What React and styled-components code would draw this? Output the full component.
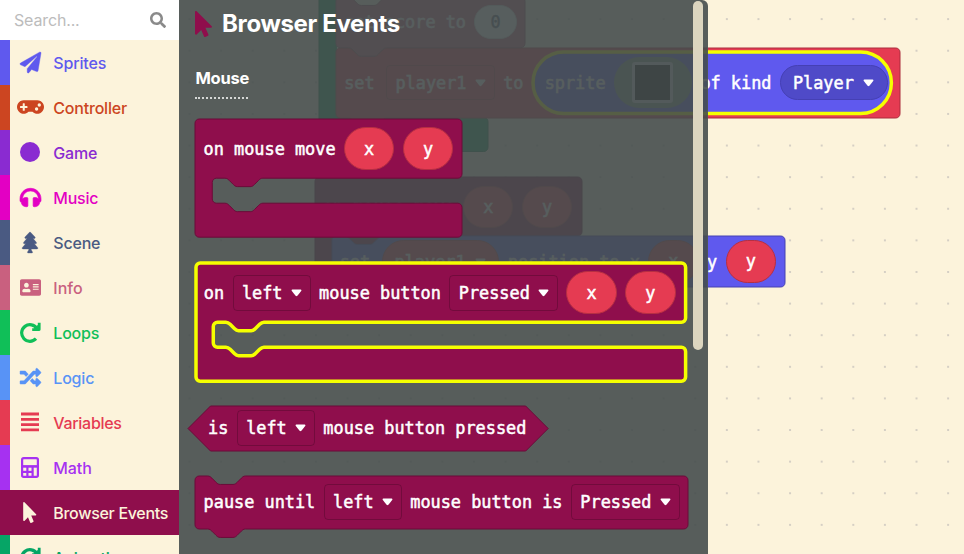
import React from "react";
import styled, { createGlobalStyle } from "styled-components";
import {
  FaSearch, FaPaperPlane, FaGamepad, FaHeadphones, FaTree,
  FaAddressCard, FaRandom, FaMousePointer,
} from "react-icons/fa";

const K = 1.054; // workspace zoom
const CREAM = "#fcf3db";
const MAROON = "#8f0e4c";
const RED = "#e53b52";
const BLUE = "#5f59ee";
const GREEN = "#11a15e";
const INFO = "#c9607f";
const YELLOW = "#f5ff00";

const GlobalStyle = createGlobalStyle`
  * { box-sizing: border-box; }
  body { margin: 0; overflow: hidden; }
`;

const Page = styled.div`
  position: relative;
  display: flex;
  width: 964px;
  height: 554px;
  overflow: hidden;
  font-family: Inter, "Liberation Sans", sans-serif;
  background: ${CREAM};
`;

/* ---------- toolbox ---------- */
const Toolbox = styled.nav`
  width: 179px;
  flex: none;
  background: ${CREAM};
`;
const SearchBar = styled.div`
  display: flex;
  align-items: center;
  justify-content: space-between;
  height: 40px;
  padding: 0 13.5px 0 14px;
  background: #fff;
  color: #bcbcbc;
  font-size: 16px;
  letter-spacing: -0.15px;
  svg { width: 16px; height: 16px; color: #8a8a8a; }
`;
const Category = styled.div`
  display: flex;
  align-items: center;
  height: 45px;
  border-left: 10px solid ${(p) => p.$color};
  background: ${(p) => (p.$active ? p.$color : "transparent")};
  color: ${(p) => (p.$active ? CREAM : p.$color)};
  font-size: 16px;
  font-weight: 500;
  letter-spacing: ${(p) => p.$track}px;
  white-space: nowrap;
`;
const CategoryIcon = styled.span`
  display: flex;
  justify-content: center;
  width: 40px;
  margin-right: 3.3px;
  flex: none;
  margin-top: -1px;
  svg { width: ${(p) => p.$w}px; height: ${(p) => p.$h}px; }
`;

function CalculatorIcon() {
  return (
    <svg viewBox="0 0 18 21" fill="none" stroke="currentColor">
      <rect x="1.1" y="1.1" width="15.8" height="18.8" rx="1.6" strokeWidth="2.2" />
      <path d="M1 9.4H17" strokeWidth="2.6" />
      <path d="M6.4 9.5V20M11.6 9.5V20" strokeWidth="2.2" />
      <path d="M1 14.9H12" strokeWidth="2.2" />
    </svg>
  );
}
function RedoIcon() {
  return (
    <svg viewBox="0 0 21 21" fill="none" stroke="currentColor">
      <path d="M17 6.6A8.3 8.3 0 1 0 16 16.7" strokeWidth="3.2" />
      <path d="M12.2 7.6H19.2V.8" strokeWidth="2.8" strokeLinejoin="round" />
      <path d="M14.4 6.8L18.6 2.8V7.6Z" fill="currentColor" />
    </svg>
  );
}
function CircleIcon() {
  return <svg viewBox="0 0 20 20"><circle cx="10" cy="10" r="10" fill="currentColor" /></svg>;
}
function LinesIcon() {
  return (
    <svg viewBox="0 0 18 20" stroke="currentColor" strokeWidth="2.8">
      <path d="M0 2H18M0 7.3H18M0 12.6H18M0 17.9H18" />
    </svg>
  );
}

/* name, colour, icon, icon width, icon height, icon stroke, letter spacing */
const categories = [
  ["Sprites", BLUE, FaPaperPlane, 21, 21, 10, -0.15],
  ["Controller", "#cc4521", FaGamepad, 27, 22, 0, -0.2],
  ["Game", "#8a2bd1", CircleIcon, 20, 20, 0, -0.2],
  ["Music", "#e300c3", FaHeadphones, 21, 21, 16, -0.2],
  ["Scene", "#4a5a82", FaTree, 16, 21, 8, -0.2],
  ["Info", INFO, FaAddressCard, 21, 19, 0, 0],
  ["Loops", "#10bf58", RedoIcon, 21, 21, 0, -0.2],
  ["Logic", "#5893f6", FaRandom, 21, 21, 10, -0.2],
  ["Variables", RED, LinesIcon, 18, 20, 0, -0.3],
  ["Math", "#a631f1", CalculatorIcon, 18, 21, 0, -0.1],
  ["Browser Events", MAROON, FaMousePointer, 13.5, 21, 0, -0.3],
  ["Animation", "#06a566", RedoIcon, 21, 21, 0, -0.2],
];

/* ---------- block outlines ---------- */
const R = 4 * K;
const HEAD = 59.2, ARM = 25, FOOT = 34;
const scaled = (...v) => v.map((n) => (n * K).toFixed(2)).join(" ");
const notchRight = `c${scaled(2, 0, 3, 1, 4, 2)} l${scaled(4, 4)} c${scaled(1, 1, 2, 2, 4, 2)} h${12 * K} c${scaled(2, 0, 3, -1, 4, -2)} l${scaled(4, -4)} c${scaled(1, -1, 2, -2, 4, -2)}`;
const notchLeft = `c${scaled(-2, 0, -3, 1, -4, 2)} l${scaled(-4, 4)} c${scaled(-1, 1, -2, 2, -4, 2)} h${-12 * K} c${scaled(-2, 0, -3, -1, -4, -2)} l${scaled(-4, -4)} c${scaled(-1, -1, -2, -2, -4, -2)}`;
const arc = (x, y, sweep = 1, r = R) => `a${r} ${r} 0 0 ${sweep} ${x * r} ${y * r}`;

function statementPath(w, h) {
  return `M0 ${R} ${arc(1, -1)} H${12 * K} ${notchRight} H${w - R} ${arc(1, 1)} V${h - R} ${arc(-1, 1)} H${48 * K} ${notchLeft} H${R} ${arc(-1, -1)} Z`;
}
function containerPath(w, footWidth, head, arm) {
  const inset = 16.4 * K;
  const total = head + arm + FOOT;
  return `M0 ${R} ${arc(1, -1)} H${w - R} ${arc(1, 1)} V${head - R} ${arc(-1, 1)} H${inset + 48 * K} ${notchLeft} H${inset + R} ${arc(-1, 1, 0)} V${head + arm - R} ${arc(1, 1, 0)} H${inset + 12 * K} ${notchRight} H${footWidth - R} ${arc(1, 1)} V${total - R} ${arc(-1, 1)} H${R} ${arc(-1, -1)} Z`;
}
function booleanPath(w, h) {
  const s = h / 2;
  return `M${s} 0 H${w - s} L${w} ${s} L${w - s} ${h} H${s} L0 ${s} Z`;
}
function pillPath(w, h) {
  const s = h / 2;
  return `M${s} 0 H${w - s} a${s} ${s} 0 0 1 0 ${h} H${s} a${s} ${s} 0 0 1 0 ${-h} Z`;
}

const BlockFrame = styled.div`
  position: relative;
  flex: none;
  width: ${(p) => p.$w}px;
  height: ${(p) => p.$h}px;
  margin: ${(p) => p.$margin || 0};
  font: 16.87px "DejaVu Sans Mono", monospace;
  -webkit-text-stroke: 0.5px;
  color: #fff;
`;
const Outline = styled.svg`
  position: absolute;
  left: 0;
  top: 0;
  width: 100%;
  height: 100%;
  overflow: visible;
`;
const BlockRow = styled.div`
  position: relative;
  display: flex;
  align-items: center;
  gap: 8.43px;
  height: ${(p) => p.$h}px;
  padding-left: ${(p) => p.$pad || 8.2}px;
`;
const Label = styled.span`
  flex: none;
  white-space: pre;
  line-height: 20px;
`;
const Field = styled.span`
  display: flex;
  flex: none;
  align-items: center;
  gap: ${(p) => (p.$round ? 9 : 8.4)}px;
  height: ${(p) => p.$h || 36}px;
  margin-left: ${(p) => p.$indent || 0}px;
  padding: ${(p) => (p.$round ? "0 12.8px 0 12px" : "0 7.8px 0 8.4px")};
  border: 1px solid ${(p) => p.$border || "rgba(0,0,0,.2)"};
  border-radius: ${(p) => (p.$round ? 22 : 4)}px;
  background: ${(p) => p.$fill || "transparent"};
  line-height: 20px;
`;
const Bubble = styled.span`
  display: flex;
  flex: none;
  align-items: center;
  justify-content: center;
  width: ${(p) => p.$w || 50.4}px;
  height: ${(p) => p.$h || 42.8}px;
  border: 1px solid ${(p) => (p.$light ? "#d8d8d8" : "#b62f42")};
  border-radius: 22px;
  background: ${(p) => (p.$light ? "#fff" : RED)};
  color: ${(p) => (p.$light ? "#575e75" : "#fff")};
`;
const ImageField = styled.span`
  display: flex;
  flex: none;
  align-items: center;
  justify-content: center;
  width: 78px;
  height: 51px;
  border-radius: 26px;
  background: #7b9a80;
`;
const Swatch = styled.span`
  width: 41px;
  height: 41px;
  border: 3px solid #d3d3dc;
  border-radius: 3px;
  background: #000;
`;

function Arrow() {
  return (
    <svg width="11" height="8" viewBox="0 0 11 8">
      <path d="M1.3.5H9.7Q11 .8 10.2 2L6.4 6.8Q5.5 7.7 4.6 6.8L.8 2Q0 .8 1.3.5Z" fill="#fff" />
    </svg>
  );
}
function Dropdown({ children, ...rest }) {
  return <Field {...rest}>{children}<Arrow /></Field>;
}
function Block({ w, h, path, color, edge, glow, rowHeight, pad, margin, children }) {
  return (
    <BlockFrame $w={w} $h={h} $margin={margin}>
      <Outline>
        <path d={path} fill={color} stroke={glow ? YELLOW : edge} strokeWidth={glow ? 3.5 : 1} />
      </Outline>
      <BlockRow $h={rowHeight || h} $pad={pad}>{children}</BlockRow>
    </BlockFrame>
  );
}

/* ---------- workspace ---------- */
const Workspace = styled.main`
  position: relative;
  flex: 1;
  background-image: radial-gradient(circle at center, #c2bdb9 0.5px, transparent 1.1px);
  background-size: 31.62px 31.62px;
  background-position: 26.3px 3.3px;
`;
const Placed = styled.div`
  position: absolute;
  left: ${(p) => p.$x - 179}px;
  top: ${(p) => p.$y}px;
`;

/* ---------- flyout ---------- */
const Flyout = styled.section`
  position: absolute;
  left: 179px;
  top: 0;
  width: 529px;
  height: 554px;
  padding: 7px 0 0 16.4px;
  display: flex;
  flex-direction: column;
  overflow: hidden;
  border-right: 1px solid rgba(90, 95, 92, 0.4);
  border-top-right-radius: 6px;
  background: rgba(69, 77, 77, 0.9);
  color: #fff;
`;
const FlyoutTitle = styled.h1`
  display: flex;
  align-items: center;
  gap: 9.7px;
  height: 33px;
  margin: 0;
  font-size: 24px;
  font-weight: 650;
  letter-spacing: -0.36px;
  svg { width: 17px; height: 26px; color: ${MAROON}; margin-top: 1px; }
`;
const GroupLabel = styled.h2`
  align-self: flex-start;
  width: 53px;
  height: 37px;
  margin: 22px 0 20.2px;
  padding-top: 5px;
  border-bottom: 2px dotted #d5d7d6;
  font-size: 16.5px;
  font-weight: 650;
  letter-spacing: -0.25px;
  line-height: 22px;
  white-space: nowrap;
`;
const ScrollThumb = styled.div`
  position: absolute;
  left: 692.6px;
  top: 1.3px;
  width: 10.4px;
  height: 348.6px;
  border-radius: 5px;
  background: #dcd5bf;
`;

const edgeMaroon = "#6b0b39";

export default function App() {
  return (
    <Page>
      <GlobalStyle />
      <Toolbox>
        <SearchBar><span>Search...</span><FaSearch /></SearchBar>
        {categories.map(([name, color, Icon, w, h, stroke, track]) => (
          <Category key={name} $color={color} $track={track} $active={name === "Browser Events"}>
            <CategoryIcon $w={w} $h={h}><Icon strokeWidth={stroke} overflow="visible" /></CategoryIcon>
            {name}
          </Category>
        ))}
      </Toolbox>

      <Workspace>
        <Placed $x={318.7} $y={-84}>
          <Block w={169} h={236} color={GREEN} edge="#0c7d48" path={containerPath(169, 169, 59, 142.5)} />
        </Placed>
        <Placed $x={336} $y={47.7}>
          <Block w={564} h={70} color={RED} edge="#ab2c3d" path={statementPath(564, 70)}>
            <Label>set</Label>
            <Dropdown $h={35} $indent={3}>player1</Dropdown>
            <Label>to</Label>
            <Block w={358.4} h={61.5} color={BLUE} glow margin="0 0 0 0.8px" path={pillPath(358.4, 61.5)} pad={12}>
              <Label>sprite</Label>
              <ImageField><Swatch /></ImageField>
              <Label>of kind</Label>
              <Dropdown $round $h={35} $fill="#4f4ac8" $border="#4540b4">Player</Dropdown>
            </Block>
          </Block>
        </Placed>
        <Placed $x={336} $y={-3}>
          <Block w={189} h={50.7} color={INFO} edge="#97485f" path={statementPath(189, 50.7)}>
            <Label>set score to</Label>
            <Bubble $light $w={42.5} $h={34}>0</Bubble>
          </Block>
        </Placed>
        <Placed $x={314.5} $y={177}>
          <Block w={267} h={144} rowHeight={60} color={MAROON} edge={edgeMaroon} path={containerPath(267, 267, 59, 51)}>
            <Label>on mouse move</Label>
            <Bubble>x</Bubble>
            <Bubble>y</Bubble>
          </Block>
        </Placed>
        <Placed $x={331.5} $y={236}>
          <Block w={453} h={51} color={BLUE} edge="#4742b2" path={statementPath(453, 51)}>
            <Label>set</Label>
            <Dropdown $round $h={43} $indent={3} $fill={RED} $border="#b62f42">player1</Dropdown>
            <Label>position to x</Label>
            <Bubble>x</Bubble>
            <Label>y</Label>
            <Bubble>y</Bubble>
          </Block>
        </Placed>
      </Workspace>

      <Flyout>
        <FlyoutTitle><FaMousePointer preserveAspectRatio="none" />Browser Events</FlyoutTitle>
        <GroupLabel>Mouse</GroupLabel>
        <Block w={267} h={118.2} rowHeight={HEAD} color={MAROON} edge={edgeMaroon}
          path={containerPath(267, 267, HEAD, ARM)}>
          <Label>on mouse move</Label>
          <Bubble>x</Bubble>
          <Bubble>y</Bubble>
        </Block>
        <Block w={489.6} h={118.2} rowHeight={HEAD} color={MAROON} glow margin="25.6px 0 0 0.2px"
          path={containerPath(489.6, 489.6, HEAD, ARM)}>
          <Label>on</Label>
          <Dropdown>left</Dropdown>
          <Label>mouse button</Label>
          <Dropdown>Pressed</Dropdown>
          <Bubble>x</Bubble>
          <Bubble>y</Bubble>
        </Block>
        <Block w={360.2} h={45} color={MAROON} edge={edgeMaroon} margin="24.4px 0 0 -7.9px" pad={20.5}
          path={booleanPath(360.2, 45)}>
          <Label>is</Label>
          <Dropdown>left</Dropdown>
          <Label>mouse button pressed</Label>
        </Block>
        <Block w={493} h={53} color={MAROON} edge={edgeMaroon} margin="25.2px 0 0"
          path={statementPath(493, 53)}>
          <Label>pause until</Label>
          <Dropdown>left</Dropdown>
          <Label>mouse button is</Label>
          <Dropdown>Pressed</Dropdown>
        </Block>
      </Flyout>
      <ScrollThumb />
    </Page>
  );
}
